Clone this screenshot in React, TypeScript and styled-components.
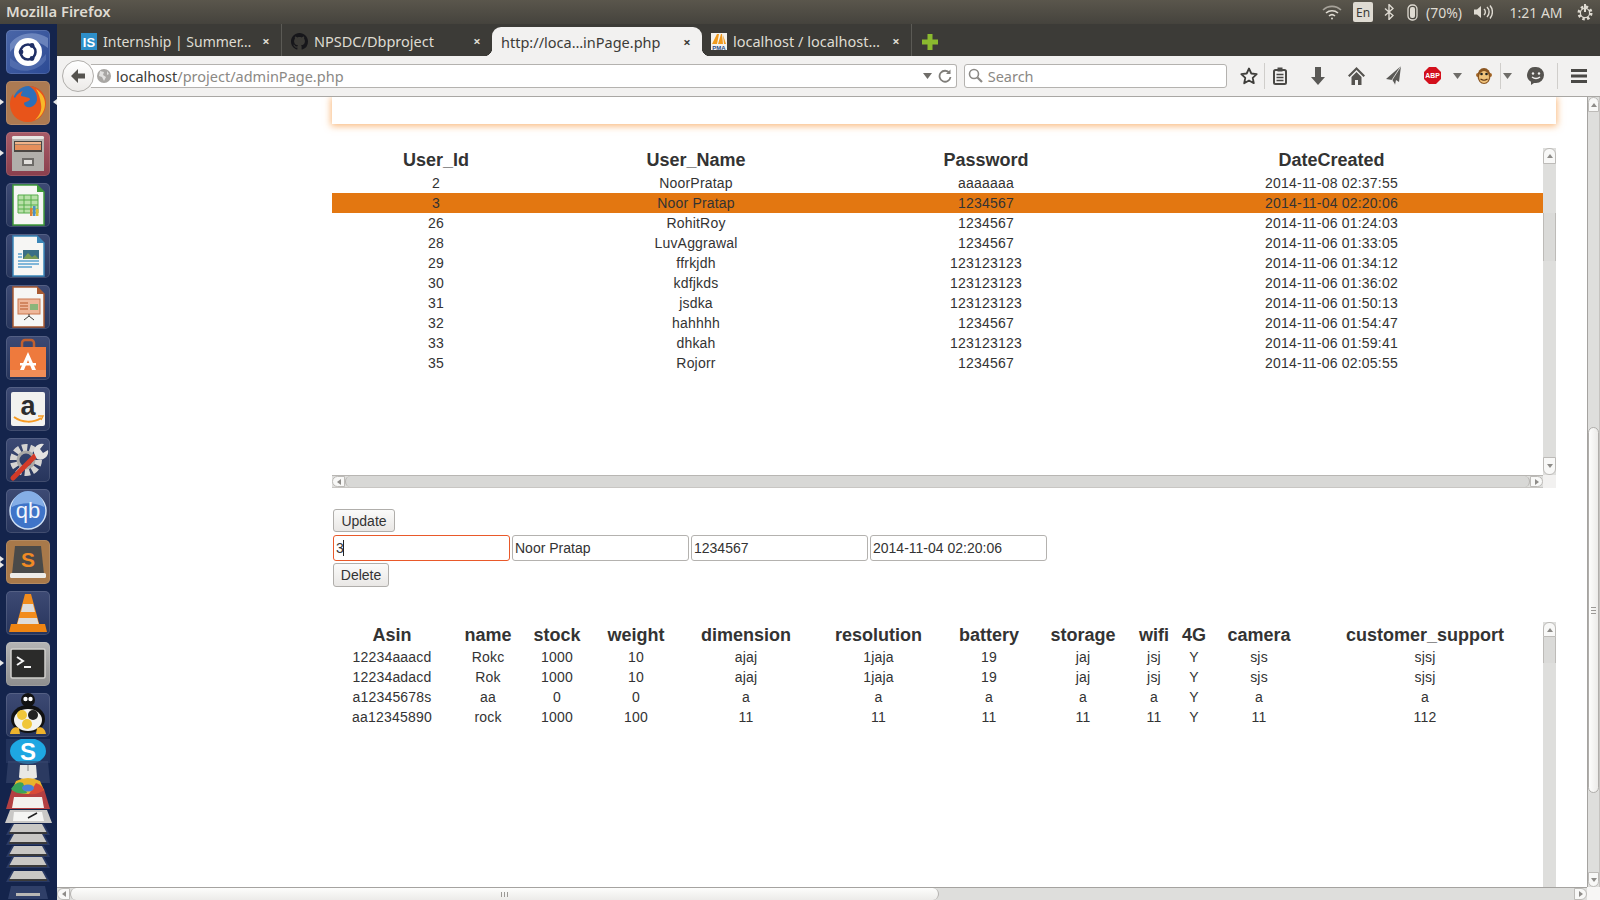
import React from 'react';
import styled, {createGlobalStyle} from 'styled-components';

const GlobalStyle = createGlobalStyle`
  html, body {
    margin: 0;
    padding: 0;
    height: 100%;
    overflow: hidden;
    background: #fff;
  }
  #root {
    height: 100%;
  }
  * {
    box-sizing: border-box;
  }
`;

const UI_FONT = `"Noto Sans", "Open Sans", sans-serif`;
const PAGE_FONT = `"Liberation Sans", Arial, sans-serif`;
const DARK_TILE = 'linear-gradient(#3d4a74, #27355c)';

const Desktop = styled.div`
  width: 1600px;
  height: 900px;
  display: flex;
  flex-direction: column;
  overflow: hidden;
`;

/* ---------- ubuntu top panel ---------- */

const TopPanel = styled.div`
  height: 24px;
  flex: 0 0 24px;
  display: flex;
  align-items: center;
  padding: 0 5px 0 6px;
  background: linear-gradient(#5a564c, #45433d);
  color: #dfdbd2;
  font-family: ${UI_FONT};
  font-size: 14px;
`;

const AppName = styled.div`
  font-weight: 600;
  font-size: 14.8px;
  margin-top: -2px;
  flex: 1;
`;

const Indicators = styled.div`
  display: flex;
  align-items: center;
  height: 24px;
`;

const Indicator = styled.div<{$w: number}>`
  width: ${p => p.$w}px;
  display: flex;
  align-items: center;
  justify-content: center;
  white-space: nowrap;
`;

const LangBadge = styled.div`
  width: 20px;
  height: 20px;
  background: #dfdbd2;
  color: #3c3b37;
  border-radius: 2px;
  font-size: 12px;
  display: flex;
  align-items: center;
  justify-content: center;
`;

/* ---------- launcher ---------- */

const Body = styled.div`
  flex: 1;
  display: flex;
  min-height: 0;
`;

const Launcher = styled.div`
  width: 57px;
  flex: 0 0 57px;
  padding-top: 6px;
  display: flex;
  flex-direction: column;
  align-items: flex-start;
  gap: 7px;
  background: #14244c;
  overflow: hidden;
`;

const TileWrap = styled.div`
  position: relative;
  margin-left: 6px;
  width: 44px;
  height: 44px;
  flex: 0 0 44px;
`;

const Tile = styled.div<{$bg: string}>`
  width: 44px;
  height: 44px;
  border-radius: 5px;
  background: ${p => p.$bg};
  box-shadow: inset 0 0 0 1px rgba(255, 255, 255, 0.12);
  overflow: hidden;
  svg {
    display: block;
  }
`;

const PipLeft = styled.div<{$top?: number}>`
  position: absolute;
  left: -6px;
  top: ${p => p.$top ?? 18}px;
  border-left: 4px solid #e8e8e8;
  border-top: 3.5px solid transparent;
  border-bottom: 3.5px solid transparent;
`;

const PipRight = styled.div`
  position: absolute;
  right: -7px;
  top: 18px;
  border-right: 4px solid #e8e8e8;
  border-top: 3.5px solid transparent;
  border-bottom: 3.5px solid transparent;
`;

const StackArt = styled.svg`
  flex: 0 0 160px;
  margin-top: -5px;
  display: block;
`;

/* ---------- firefox window ---------- */

const Win = styled.div`
  flex: 1;
  min-width: 0;
  display: flex;
  flex-direction: column;
`;

const TabBar = styled.div`
  height: 32px;
  flex: 0 0 32px;
  display: flex;
  align-items: stretch;
  padding-left: 15px;
  background: #3c3b37;
  font-family: ${UI_FONT};
  font-size: 14.5px;
  color: #dfdbd2;
`;

const Tab = styled.div<{$active?: boolean; $divider?: boolean}>`
  position: relative;
  width: 210px;
  display: flex;
  align-items: center;
  padding: ${p => (p.$active ? '0 9px' : '2px 9px 0')};
  margin-top: ${p => (p.$active ? 3 : 0)}px;
  gap: 6px;
  border-right: ${p => (p.$divider ? '1px solid #5b5a55' : 'none')};
  background: ${p => (p.$active ? '#f2f1f0' : 'transparent')};
  color: ${p => (p.$active ? '#3c3b37' : '#dfdbd2')};
  border-radius: ${p => (p.$active ? '9px 9px 0 0' : '0')};
  ${p =>
    p.$active &&
    `
    &::before, &::after {
      content: '';
      position: absolute;
      bottom: 0;
      width: 8px;
      height: 8px;
    }
    &::before {
      left: -8px;
      background: radial-gradient(circle at 0 0, transparent 8px, #f2f1f0 8.5px);
    }
    &::after {
      right: -8px;
      background: radial-gradient(circle at 100% 0, transparent 8px, #f2f1f0 8.5px);
    }
  `}
`;

const TabTitle = styled.div<{$tight?: boolean}>`
  flex: 1;
  white-space: nowrap;
  font-size: ${p => (p.$tight ? '14px' : 'inherit')};
`;

const TabClose = styled.span`
  font-size: 13px;
  font-weight: 700;
  width: 12px;
  text-align: center;
`;

const NewTab = styled.div`
  width: 36px;
  padding-top: 3px;
  display: flex;
  align-items: center;
  justify-content: center;
`;

const NavBar = styled.div`
  height: 41px;
  flex: 0 0 41px;
  display: flex;
  align-items: center;
  padding-left: 5px;
  padding-bottom: 1px;
  background: #f2f1f0;
  border-bottom: 1px solid #a9a7a4;
  font-family: ${UI_FONT};
`;

const BackButton = styled.div`
  width: 32px;
  height: 32px;
  border-radius: 50%;
  background: linear-gradient(#fff, #eceae8);
  border: 1px solid #b0aeab;
  display: flex;
  align-items: center;
  justify-content: center;
  flex: 0 0 32px;
  z-index: 1;
`;

const UrlBox = styled.div`
  width: 868px;
  height: 24px;
  margin-left: -3px;
  background: #fff;
  border: 1px solid #b4b2af;
  border-left: none;
  border-radius: 0 3px 3px 0;
  display: flex;
  align-items: center;
  padding: 0 2px 0 6px;
  font-size: 14.5px;
  color: #3c3b37;
`;

const UrlText = styled.div`
  flex: 1;
  margin-left: 5px;
  white-space: nowrap;
`;

const UrlRest = styled.span`
  color: #8b8985;
`;

const SearchBox = styled.div`
  width: 264px;
  height: 24px;
  margin-left: 7px;
  background: #fff;
  border: 1px solid #b4b2af;
  border-radius: 3px;
  display: flex;
  align-items: center;
  gap: 5px;
  padding-left: 3px;
  font-size: 14.5px;
  color: #8b8985;
`;

const ToolSlot = styled.div<{$w: number}>`
  width: ${p => p.$w}px;
  height: 24px;
  display: flex;
  align-items: center;
  justify-content: center;
`;

const ToolSep = styled.div`
  width: 1px;
  height: 26px;
  margin-left: -1px;
  background: #d0cecb;
`;

const Toolbar = styled.div`
  display: flex;
  align-items: center;
  margin-left: 6px;
`;

/* ---------- page ---------- */

const Viewport = styled.div`
  flex: 1;
  min-height: 0;
  display: flex;
`;

const Page = styled.div`
  flex: 1;
  min-width: 0;
  display: flex;
  flex-direction: column;
  padding: 0 31px 0 275px;
  background: #fff;
  overflow: hidden;
`;

const HeaderCard = styled.div`
  height: 27px;
  flex: 0 0 27px;
  background: #fff;
  box-shadow: 0 1px 7px 1px rgba(247, 160, 80, 0.75);
`;

const GridBox = styled.div<{$h?: number; $top: number}>`
  margin-top: ${p => p.$top}px;
  display: flex;
  flex-direction: column;
  ${p => (p.$h ? `flex: 0 0 ${p.$h}px;` : 'flex: 1; min-height: 0;')}
`;

const GridRow = styled.div`
  flex: 1;
  min-height: 0;
  display: flex;
`;

const GridScroll = styled.div`
  flex: 1;
  min-width: 0;
  overflow: hidden;
`;

const DataTable = styled.table<{$w: number}>`
  width: ${p => p.$w}px;
  table-layout: fixed;
  border-collapse: collapse;
  font-family: ${PAGE_FONT};
  font-size: 14px;
  color: #333;
`;

const Col = styled.col<{$w: number}>`
  width: ${p => p.$w}px;
`;

const HeadCell = styled.th<{$shift: number}>`
  height: 25px;
  padding: ${p => p.$shift}px 0 0;
  font-size: 18px;
  font-weight: 700;
  text-align: center;
  color: #333;
  white-space: nowrap;
`;

const DataRow = styled.tr<{$selected?: boolean}>`
  height: 20px;
  background: ${p => (p.$selected ? '#e37711' : 'transparent')};
`;

const DataCell = styled.td`
  padding: 0;
  text-align: center;
  white-space: nowrap;
  letter-spacing: 0.2px;
`;

const FormBlock = styled.div`
  margin-top: 21px;
  display: flex;
  flex-direction: column;
  align-items: flex-start;
  padding-left: 1px;
`;

const ActionButton = styled.button<{$h: number; $w: number; $top?: number}>`
  width: ${p => p.$w}px;
  height: ${p => p.$h}px;
  margin-top: ${p => p.$top ?? 0}px;
  padding: 0;
  border: 1px solid #b0aeab;
  border-radius: 3px;
  background: linear-gradient(#fbfbfa, #e9e7e5);
  font-family: ${PAGE_FONT};
  font-size: 14px;
  color: #333;
`;

const FieldRow = styled.div`
  display: flex;
  gap: 2px;
  margin-top: 3px;
`;

const FieldWrap = styled.div`
  position: relative;
`;

const Field = styled.input<{$focused?: boolean}>`
  display: block;
  width: 177px;
  height: 26px;
  padding: 0 2px;
  border: 1px solid ${p => (p.$focused ? '#e9592a' : '#b4b2af')};
  border-radius: 3px;
  outline: none;
  background: #fff;
  font-family: ${PAGE_FONT};
  font-size: 14px;
  color: #333;
`;

const Caret = styled.div`
  position: absolute;
  left: 10px;
  top: 5px;
  width: 1px;
  height: 16px;
  background: #222;
`;

/* ---------- scrollbars ---------- */

const VBar = styled.div<{$edge?: boolean}>`
  width: 13px;
  flex: 0 0 13px;
  display: flex;
  flex-direction: column;
  background: #dededc;
  border-left: ${p => (p.$edge ? '1px solid #a5a3a0' : 'none')};
  border-right: ${p => (p.$edge ? '1px solid #c5c3c0' : 'none')};
`;

const HBar = styled.div<{$page?: boolean}>`
  flex: 1;
  min-width: 0;
  display: flex;
  background: #dededc;
  border-top: ${p => (p.$page ? '1px solid #a5a3a0' : '1px solid #b8b6b3')};
  border-bottom: ${p => (p.$page ? 'none' : '1px solid #c8c6c3')};
`;

const VStep = styled.div<{$h: number; $down?: boolean}>`
  height: ${p => p.$h}px;
  flex: 0 0 ${p => p.$h}px;
  background: #f8f8f7;
  border: 1px solid #bdbbb8;
  border-radius: ${p => (p.$down ? '0 0 6px 6px' : '6px 6px 0 0')};
  display: flex;
  align-items: center;
  justify-content: center;
`;

const HStep = styled.div<{$right?: boolean}>`
  width: 13px;
  flex: 0 0 13px;
  background: #f8f8f7;
  border: 1px solid #bdbbb8;
  border-radius: ${p => (p.$right ? '0 6px 6px 0' : '6px 0 0 6px')};
  display: flex;
  align-items: center;
  justify-content: center;
`;

const ArrowUp = styled.div`
  border-bottom: 4px solid #8e8c89;
  border-left: 3px solid transparent;
  border-right: 3px solid transparent;
`;

const ArrowDown = styled.div`
  border-top: 4px solid #8e8c89;
  border-left: 3px solid transparent;
  border-right: 3px solid transparent;
`;

const ArrowLeft = styled.div`
  border-right: 4px solid #8e8c89;
  border-top: 3px solid transparent;
  border-bottom: 3px solid transparent;
`;

const ArrowRight = styled.div`
  border-left: 4px solid #8e8c89;
  border-top: 3px solid transparent;
  border-bottom: 3px solid transparent;
`;

const TrackGap = styled.div<{$size?: number}>`
  ${p => (p.$size ? `flex: 0 0 ${p.$size}px;` : 'flex: 1;')}
`;

const VThumb = styled.div<{$h: number}>`
  flex: 0 0 ${p => p.$h}px;
  background: linear-gradient(90deg, #fdfdfc, #ecebe9);
  border: 1px solid #b0aeab;
  border-radius: 6px;
  display: flex;
  flex-direction: column;
  align-items: center;
  justify-content: center;
  gap: 2px;
`;

const GripLine = styled.div`
  width: 5px;
  height: 1px;
  background: #9b9996;
`;

const FlatThumb = styled.div<{$h: number}>`
  flex: 0 0 ${p => p.$h}px;
  background: #dadad8;
  border-left: 1px solid #bdbbb8;
  border-right: 1px solid #bdbbb8;
`;

const HThumb = styled.div<{$w?: number; $flat?: boolean}>`
  flex: ${p => (p.$w ? `0 0 ${p.$w}px` : '1')};
  background: ${p => (p.$flat ? '#d8d8d6' : 'linear-gradient(#fdfdfc, #ecebe9)')};
  border-right: 1px solid #b5b3b0;
  border-left: 1px solid #b5b3b0;
  border-radius: 6px;
  display: flex;
  align-items: center;
  justify-content: center;
  gap: 2px;
`;

const GripTick = styled.div`
  width: 1px;
  height: 5px;
  background: #9b9996;
`;

const Corner = styled.div<{$bg: string}>`
  width: 13px;
  flex: 0 0 13px;
  background: ${p => p.$bg};
`;

const BottomRow = styled.div`
  height: 13px;
  flex: 0 0 13px;
  display: flex;
`;

/* ---------- launcher artwork ---------- */

const UbuntuArt = () => (
  <svg width="44" height="44" viewBox="0 0 44 44">
    <path d="M4 14C12 2 30 0 42 8v10C30 8 14 8 4 22z" fill="#8ba0d0" opacity="0.6" />
    <path d="M40 30C32 42 14 44 4 36v-8c10 10 26 8 36-4z" fill="#5f79b8" opacity="0.6" />
    <circle cx="22" cy="22" r="14" fill="#fff" />
    <circle cx="22" cy="22" r="7.500" fill="none" stroke="#1f2f66" strokeWidth="2.600" />
    <circle cx="15" cy="22" r="2.400" fill="#1f2f66" />
    <circle cx="26" cy="15.500" r="2.400" fill="#1f2f66" />
    <circle cx="26" cy="28.500" r="2.400" fill="#1f2f66" />
  </svg>
);

const FirefoxArt = () => (
  <svg width="44" height="44" viewBox="0 0 44 44">
    <circle cx="23" cy="21" r="16" fill="#2d6fb8" />
    <path d="M23 5c9 0 17 7 17 17 0 11-8 19-18 19C11 41 4 33 4 23c0-4 1-7 3-10 0 2 1 3 2 4 2-4 5-6 8-7-2 2-2 4-2 5 3 1 8 1 9 3 0 2-5 3-6 4 0 3 3 5 7 4 3-1 6-4 6-8 0-6-3-10-8-13z" fill="#e8541a" />
    <path d="M30 8c6 4 9 9 9 15 0 7-4 13-10 16 5-5 7-10 6-16-1-6-2-10-5-15z" fill="#f8b82a" />
  </svg>
);

const FilesArt = () => (
  <svg width="44" height="44" viewBox="0 0 44 44">
    <rect x="6" y="4" width="32" height="35" rx="2" fill="#b7b5b1" />
    <rect x="6" y="4" width="32" height="3" rx="1.500" fill="#e9e7e4" />
    <rect x="8" y="9" width="28" height="11" fill="#4a4643" />
    <rect x="9" y="10" width="26" height="2.500" fill="#f1b389" />
    <rect x="9" y="13" width="26" height="5" fill="#e68f5b" />
    <rect x="6" y="20" width="32" height="19" fill="#b1afab" />
    <rect x="16" y="26" width="12" height="8" fill="#6d6b68" />
    <rect x="18" y="28" width="8" height="4" fill="#e2e0dd" />
  </svg>
);

const OfficeDoc = ({edge, children}: {edge: string; children: React.ReactNode}) => (
  <svg width="44" height="44" viewBox="0 0 44 44">
    <path d="M7 2h24l7 7v33H7z" fill="#f6f6f4" stroke={edge} strokeWidth="1.500" />
    <path d="M31 2l7 7h-7z" fill={edge} />
    {children}
  </svg>
);

const CalcArt = () => (
  <OfficeDoc edge="#3f9a3a">
    <path d="M12 12h20v18H12z" fill="#b9e0a9" stroke="#57ad4a" />
    <path d="M12 17h20M12 22h20M12 26h20M18 12v18M25 12v18" stroke="#57ad4a" />
    <rect x="24" y="25" width="2.500" height="8" fill="#d98236" />
    <rect x="27" y="23" width="2.500" height="10" fill="#4f8fc4" />
    <rect x="30" y="26" width="2.500" height="7" fill="#d9bb36" />
  </OfficeDoc>
);

const WriterArt = () => (
  <OfficeDoc edge="#3a86b8">
    <rect x="17" y="16" width="16" height="9" fill="#3b6f86" />
    <path d="M17 25l5-6 4 4 3-2 4 4z" fill="#7a9b54" />
    <path d="M12 20h4M12 23h4M12 27h21M12 30h21M12 33h14" stroke="#5ba2cf" strokeWidth="1.500" />
  </OfficeDoc>
);

const ImpressArt = () => (
  <OfficeDoc edge="#a85a32">
    <rect x="12" y="14" width="22" height="15" fill="#eeb79a" stroke="#c9774e" />
    <rect x="24" y="19" width="8" height="6" fill="#8bb57a" />
    <path d="M14 18h8M14 21h8M14 24h8" stroke="#c9774e" strokeWidth="1.500" />
    <path d="M23 29v2l-5 4M23 31l5 4" stroke="#3c3b37" fill="none" />
  </OfficeDoc>
);

const BagArt = () => (
  <svg width="44" height="44" viewBox="0 0 44 44">
    <path d="M16 12V7a3 3 0 0 1 3-3h6a3 3 0 0 1 3 3v5" fill="none" stroke="#c2602f" strokeWidth="2.500" />
    <path d="M4 11h36v30H4z" fill="#ee7a3d" />
    <path d="M4 34h36v7H4z" fill="#f08d57" />
    <path d="M22 16l-8 18h4l4-10 4 10h4z" fill="#fff" />
    <path d="M14 27h16v2.500H14z" fill="#fff" />
  </svg>
);

const AmazonArt = () => (
  <svg width="44" height="44" viewBox="0 0 44 44">
    <rect x="5" y="5" width="34" height="34" rx="2" fill="#f2f2f0" />
    <text x="22" y="28" textAnchor="middle" fontFamily="Liberation Sans" fontWeight="700" fontSize="27" fill="#2d2d2d">a</text>
    <path d="M8 30c8 6 20 6 27 1" fill="none" stroke="#f59a23" strokeWidth="2" />
    <path d="M32 29l5 0-2 4" fill="none" stroke="#f59a23" strokeWidth="1.500" />
  </svg>
);

const ToolsArt = () => (
  <svg width="44" height="44" viewBox="0 0 44 44">
    <circle cx="20" cy="22" r="12" fill="none" stroke="#d5d4d2" strokeWidth="8" strokeDasharray="5 2.500" />
    <circle cx="20" cy="22" r="8" fill="none" stroke="#aaa9a6" strokeWidth="3" />
    <path d="M7 40l22-22" stroke="#d23a28" strokeWidth="5" strokeLinecap="round" />
    <path d="M28 15a8 8 0 0 1 10-9l-4 5 3 4 5-3a8 8 0 0 1-11 9z" fill="#e4e3e1" />
  </svg>
);

const QbArt = () => (
  <svg width="44" height="44" viewBox="0 0 44 44">
    <circle cx="22" cy="22" r="18" fill="#3f74c8" stroke="#cfe0f5" strokeWidth="1.500" />
    <path d="M6 18a16 16 0 0 1 32 0c-9-5-23-5-32 0z" fill="#85aee6" />
    <text x="22" y="29" textAnchor="middle" fontFamily="Liberation Sans" fontSize="22" fill="#f2f6fc">qb</text>
  </svg>
);

const SublimeArt = () => (
  <svg width="44" height="44" viewBox="0 0 44 44">
    <path d="M9 6h26l3 28H6z" fill="#4a4a49" />
    <rect x="4" y="33" width="36" height="5" rx="1.500" fill="#eeece8" />
    <text x="22" y="27" textAnchor="middle" fontFamily="Liberation Sans" fontWeight="700" fontSize="21" fill="#f08a24">S</text>
  </svg>
);

const VlcArt = () => (
  <svg width="44" height="44" viewBox="0 0 44 44">
    <path d="M19 3h6l9 33H10z" fill="#f28c1c" />
    <path d="M17 13h10l2 8H15z" fill="#dedcda" />
    <path d="M13 27h18l2 7H11z" fill="#dedcda" />
    <path d="M5 33h34l2 8H3z" fill="#ee8412" />
  </svg>
);

const TerminalArt = () => (
  <svg width="44" height="44" viewBox="0 0 44 44">
    <rect x="5" y="7" width="34" height="29" rx="1.500" fill="#2b2b2a" stroke="#d0cfcc" strokeWidth="1.500" />
    <path d="M11 15l6 4-6 4" fill="none" stroke="#f5f5f5" strokeWidth="2" />
    <path d="M18 25h7" stroke="#f5f5f5" strokeWidth="2" />
  </svg>
);

const PenguinArt = () => (
  <svg width="44" height="44" viewBox="0 0 44 44">
    <ellipse cx="22" cy="26" rx="17" ry="14" fill="#111" />
    <ellipse cx="22" cy="27" rx="14" ry="11" fill="#f3f3f0" />
    <circle cx="22" cy="7" r="7" fill="#111" />
    <circle cx="19.500" cy="6" r="2.200" fill="#fff" />
    <circle cx="24.500" cy="6" r="2.200" fill="#fff" />
    <circle cx="16" cy="22" r="5" fill="#f0c63a" />
    <circle cx="27" cy="22" r="5" fill="#222" />
    <circle cx="21" cy="31" r="5" fill="#f0c63a" />
    <path d="M4 41c1-6 5-8 9-6l1 6zM40 41c-1-6-5-8-9-6l-1 6z" fill="#eeb32c" />
  </svg>
);

const StackArtwork = () => (
  <StackArt width="57" height="160" viewBox="0 0 57 160">
    <rect x="6" y="0" width="44" height="24" fill="#2a3a64" opacity="0.7" />
    <ellipse cx="28" cy="12" rx="18" ry="13" fill="#1ea7e2" />
    <text x="28" y="21" textAnchor="middle" fontFamily="Liberation Sans" fontWeight="700" fontSize="24" fill="#fff">S</text>
    <path d="M8 22h40l2 22H6z" fill="#3a4970" opacity="0.6" />
    <path d="M20 26h16l1 12c0 3-18 3-18 0z" fill="#e9e8e4" />
    <path d="M28 26v6" stroke="#888" />
    <path d="M6 70l6-20h32l6 20z" fill="#b44042" />
    <path d="M16 42q12-6 24 0l4 9q-16 8-32 0z" fill="#e8b42c" />
    <path d="M11 50q6-9 12-6l4 10q-10 2-16-4z" fill="#3aa45a" />
    <path d="M36 44q6 2 8 7-6 5-15 4z" fill="#d94a38" />
    <ellipse cx="28" cy="49" rx="6" ry="3.500" fill="#4a82d8" />
    <path d="M14 58h28l2 11H12z" fill="#f3f1ee" />
    <path d="M5 84l5-13h37l5 13z" fill="#c9c8c6" />
    <path d="M14 73h28l2 9H13z" fill="#f5f5f3" />
    <path d="M28 79l9-5" stroke="#222" strokeWidth="1.500" />
    {[85, 95, 107, 118, 132].map(y => (
      <g key={y}>
        <path d={`M6 ${y + 11}l6-11h32l6 11z`} fill="#2a3a64" />
        <path d={`M9 ${y + 9}l5-9h28l5 9z`} fill="#c8c7c4" />
        <rect x="9" y={y + 8} width="38" height="2" fill="#3a3a3a" />
      </g>
    ))}
    <path d="M8 160l3-13h34l3 13z" fill="#2f3f68" />
    <rect x="16" y="154" width="24" height="3" fill="#b9b8b5" />
  </StackArt>
);

const tiles: {bg: string; art: React.ReactNode; left?: boolean; right?: boolean; twin?: boolean}[] = [
  {bg: 'linear-gradient(135deg, #4a66a8, #2c4a94)', art: <UbuntuArt />},
  {bg: '#ac7a52', art: <FirefoxArt />, left: true, right: true},
  {bg: 'linear-gradient(#a85c68, #8a3f4d)', art: <FilesArt />, left: true},
  {bg: DARK_TILE, art: <CalcArt />},
  {bg: DARK_TILE, art: <WriterArt />},
  {bg: DARK_TILE, art: <ImpressArt />},
  {bg: DARK_TILE, art: <BagArt />},
  {bg: DARK_TILE, art: <AmazonArt />},
  {bg: DARK_TILE, art: <ToolsArt />},
  {bg: DARK_TILE, art: <QbArt />},
  {bg: '#a8794a', art: <SublimeArt />, twin: true},
  {bg: DARK_TILE, art: <VlcArt />},
  {bg: 'linear-gradient(#b5b5b5, #8e8e8e)', art: <TerminalArt />, left: true},
  {bg: DARK_TILE, art: <PenguinArt />},
];

/* ---------- toolbar + panel icons ---------- */

const Glyph = styled.svg`
  display: block;
`;

const WifiIcon = () => (
  <Glyph width="20" height="16" viewBox="0 0 20 16" fill="none" stroke="#dfdbd2" strokeWidth="1.600">
    <path d="M1 6a13 13 0 0 1 18 0" opacity="0.6" />
    <path d="M4 9a9 9 0 0 1 12 0" />
    <path d="M7 12a4.500 4.500 0 0 1 6 0" />
    <circle cx="10" cy="14.500" r="1" fill="#dfdbd2" stroke="none" />
  </Glyph>
);

const BluetoothIcon = () => (
  <Glyph width="10" height="16" viewBox="0 0 10 16" fill="none" stroke="#dfdbd2" strokeWidth="1.400">
    <path d="M1 4.500l8 7-4 4V.5l4 4-8 7" />
  </Glyph>
);

const MouseIcon = () => (
  <Glyph width="11" height="17" viewBox="0 0 11 17" fill="none" stroke="#dfdbd2" strokeWidth="1.300">
    <rect x="1" y="1" width="9" height="15" rx="4" />
    <rect x="3" y="3" width="5" height="11" rx="2" fill="#dfdbd2" stroke="none" />
  </Glyph>
);

const VolumeIcon = () => (
  <Glyph width="20" height="16" viewBox="0 0 20 16" fill="none" stroke="#dfdbd2" strokeWidth="1.400">
    <path d="M1 5.500h3l4-3.500v12l-4-3.500H1z" fill="#dfdbd2" stroke="none" />
    <path d="M11 5a4 4 0 0 1 0 6M14 3a7 7 0 0 1 0 10M17 1.500a10 10 0 0 1 0 13" />
  </Glyph>
);

const PowerGearIcon = () => (
  <Glyph width="18" height="18" viewBox="0 0 18 18" fill="none" stroke="#dfdbd2">
    <circle cx="9" cy="10" r="6" strokeWidth="3" strokeDasharray="2.400 2.300" />
    <circle cx="9" cy="10" r="4.600" strokeWidth="1.200" />
    <path d="M9 1v8" strokeWidth="2" />
  </Glyph>
);

const GithubMark = () => (
  <Glyph width="17" height="17" viewBox="0 0 16 16">
    <path
      fill="#16161a"
      d="M8 0C3.58 0 0 3.58 0 8c0 3.54 2.29 6.53 5.47 7.59.4.07.55-.17.55-.38 0-.19-.01-.82-.01-1.49-2.01.37-2.53-.49-2.69-.94-.09-.23-.48-.94-.82-1.13-.28-.15-.68-.52-.01-.53.63-.01 1.08.58 1.23.82.72 1.21 1.87.87 2.33.66.07-.52.28-.87.51-1.07-1.78-.2-3.64-.89-3.64-3.95 0-.87.31-1.59.82-2.15-.08-.2-.36-1.02.08-2.12 0 0 .67-.21 2.2.82.64-.18 1.32-.27 2-.27s1.36.09 2 .27c1.53-1.04 2.2-.82 2.2-.82.44 1.1.16 1.92.08 2.12.51.56.82 1.27.82 2.15 0 3.07-1.87 3.75-3.65 3.95.29.25.54.73.54 1.48 0 1.07-.01 1.93-.01 2.2 0 .21.15.46.55.38A8.01 8.01 0 0 0 16 8c0-4.420-3.580-8-8-8z"
    />
  </Glyph>
);

const IsMark = () => (
  <Glyph width="16" height="17" viewBox="0 0 16 17">
    <rect width="16" height="17" fill="#2e8fc9" />
    <text x="8" y="13.500" textAnchor="middle" fontFamily="Liberation Sans" fontWeight="700" fontSize="13" fill="#fff">IS</text>
  </Glyph>
);

const PmaMark = () => (
  <Glyph width="16" height="17" viewBox="0 0 16 17">
    <rect width="16" height="17" fill="#f4f2ee" />
    <path d="M1 11L6 1h2L6 11zM7 11l3-10h1l1 10zM12 2l3 9h-2z" fill="#f09a1e" />
    <text x="8" y="16.500" textAnchor="middle" fontFamily="Liberation Sans" fontWeight="700" fontSize="6" fill="#2b4c8c">PMA</text>
  </Glyph>
);

const PlusIcon = () => (
  <Glyph width="16" height="16" viewBox="0 0 16 16">
    <path d="M5.500 0h5v5.500H16v5h-5.500V16h-5v-5.500H0v-5h5.500z" fill="#8bbb2f" />
  </Glyph>
);

const BackIcon = () => (
  <Glyph width="16" height="16" viewBox="0 0 16 16">
    <path d="M8 1L1 8l7 7V10.500h7v-5H8z" fill="#55534f" />
  </Glyph>
);

const GlobeIcon = () => (
  <Glyph width="14" height="14" viewBox="0 0 14 14">
    <circle cx="7" cy="7" r="7" fill="#a9a7a4" />
    <path d="M3 2l4 1-1 3 3 2-2 4-2-4-3-1zM10 2l2 3-2 1z" fill="#e2e1df" />
  </Glyph>
);

const DropTri = () => (
  <Glyph width="9" height="6" viewBox="0 0 9 6">
    <path d="M0 0h9L4.500 6z" fill="#6f6d69" />
  </Glyph>
);

const ReloadIcon = () => (
  <Glyph width="14" height="14" viewBox="0 0 14 14" fill="none" stroke="#7f7d79" strokeWidth="1.800">
    <path d="M11.500 4A5.500 5.500 0 1 0 12.500 8" />
    <path d="M12.500 0.500v4.500h-4.500z" fill="#7f7d79" stroke="none" />
  </Glyph>
);

const SearchIcon = () => (
  <Glyph width="15" height="15" viewBox="0 0 15 15" fill="none" stroke="#8b8985" strokeWidth="1.600">
    <circle cx="6" cy="6" r="4.500" />
    <path d="M9.500 9.500L14 14" strokeWidth="2.200" />
  </Glyph>
);

const StarIcon = () => (
  <Glyph width="18" height="18" viewBox="0 0 18 18">
    <path d="M9 1.500l2.300 5 5.400.6-4 3.700 1.100 5.400L9 13.500l-4.800 2.700 1.100-5.400-4-3.700 5.400-.6z" fill="none" stroke="#3f3e3b" strokeWidth="1.800" strokeLinejoin="round" />
  </Glyph>
);

const ClipboardIcon = () => (
  <Glyph width="14" height="18" viewBox="0 0 14 18">
    <rect x="1" y="3" width="12" height="14" rx="1.500" fill="none" stroke="#4a4946" strokeWidth="2" />
    <rect x="4.500" y="0.500" width="5" height="4" fill="#4a4946" />
    <path d="M3.500 7.500h7M3.500 10.500h7M3.500 13.500h7" stroke="#4a4946" strokeWidth="1.500" />
  </Glyph>
);

const DownloadIcon = () => (
  <Glyph width="16" height="20" viewBox="0 0 16 20">
    <path d="M5 1h6v10h4l-7 8-7-8h4z" fill="#5a5956" />
  </Glyph>
);

const HomeIcon = () => (
  <Glyph width="17" height="18" viewBox="0 0 17 18">
    <path d="M8.500 0L0 8.500l1.500 1.500 7-7 7 7 1.500-1.500zM3.500 10l5-5 5 5v8h-3.500v-5h-3v5h-3.500z" fill="#55534f" />
  </Glyph>
);

const SendIcon = () => (
  <Glyph width="16" height="20" viewBox="0 0 16 20">
    <path d="M15 0L0 13l6 1 3 5 1-5 3 2z" fill="#5a5956" />
    <path d="M15 0L6 14l3 5" fill="none" stroke="#f2f1f0" strokeWidth="0.800" />
  </Glyph>
);

const AbpIcon = () => (
  <Glyph width="17" height="17" viewBox="0 0 17 17">
    <path d="M5 0h7l5 5v7l-5 5H5l-5-5V5z" fill="#d3101c" />
    <text x="8.500" y="11.200" textAnchor="middle" fontFamily="Liberation Sans" fontWeight="700" fontSize="6.800" fill="#fff">ABP</text>
  </Glyph>
);

const MonkeyIcon = () => (
  <Glyph width="16" height="19" viewBox="0 0 16 19">
    <circle cx="2" cy="9" r="2" fill="#a86a2a" />
    <circle cx="14" cy="9" r="2" fill="#a86a2a" />
    <ellipse cx="8" cy="10" rx="6.500" ry="8" fill="#8b5620" />
    <ellipse cx="8" cy="11" rx="5" ry="6" fill="#efc27a" />
    <circle cx="5.500" cy="8" r="1.300" fill="#222" />
    <circle cx="10.500" cy="8" r="1.300" fill="#222" />
    <path d="M4.500 13q3.500 2.500 7 0" fill="none" stroke="#5c3310" strokeWidth="1.200" />
  </Glyph>
);

const ChatIcon = () => (
  <Glyph width="18" height="19" viewBox="0 0 18 19">
    <path d="M9 1a8 8 0 0 1 0 16H7l-3 2v-3.200A8 8 0 0 1 9 1z" fill="#55534f" />
    <circle cx="6" cy="7.500" r="1.200" fill="#f2f1f0" />
    <circle cx="12" cy="7.500" r="1.200" fill="#f2f1f0" />
    <path d="M5 11q4 3 8 0" fill="none" stroke="#f2f1f0" strokeWidth="1.400" />
  </Glyph>
);

const MenuIcon = () => (
  <Glyph width="16" height="14" viewBox="0 0 16 14">
    <path d="M0 0h16v3H0zM0 5.500h16v3H0zM0 11h16v3H0z" fill="#4a4946" />
  </Glyph>
);

/* ---------- data ---------- */

const userCols = [208, 312, 268, 423];
const userHead = ['User_Id', 'User_Name', 'Password', 'DateCreated'];
const userRows = [
  ['2', 'NoorPratap', 'aaaaaaa', '2014-11-08 02:37:55'],
  ['3', 'Noor Pratap', '1234567', '2014-11-04 02:20:06'],
  ['26', 'RohitRoy', '1234567', '2014-11-06 01:24:03'],
  ['28', 'LuvAggrawal', '1234567', '2014-11-06 01:33:05'],
  ['29', 'ffrkjdh', '123123123', '2014-11-06 01:34:12'],
  ['30', 'kdfjkds', '123123123', '2014-11-06 01:36:02'],
  ['31', 'jsdka', '123123123', '2014-11-06 01:50:13'],
  ['32', 'hahhhh', '1234567', '2014-11-06 01:54:47'],
  ['33', 'dhkah', '123123123', '2014-11-06 01:59:41'],
  ['35', 'Rojorr', '1234567', '2014-11-06 02:05:55'],
];

const productCols = [120, 72, 66, 92, 128, 137, 84, 104, 38, 42, 88, 244];
const productHead = ['Asin', 'name', 'stock', 'weight', 'dimension', 'resolution', 'battery', 'storage', 'wifi', '4G', 'camera', 'customer_support'];
const productRows = [
  ['12234aaacd', 'Rokc', '1000', '10', 'ajaj', '1jaja', '19', 'jaj', 'jsj', 'Y', 'sjs', 'sjsj'],
  ['12234adacd', 'Rok', '1000', '10', 'ajaj', '1jaja', '19', 'jaj', 'jsj', 'Y', 'sjs', 'sjsj'],
  ['a12345678s', 'aa', '0', '0', 'a', 'a', 'a', 'a', 'a', 'Y', 'a', 'a'],
  ['aa12345890', 'rock', '1000', '100', '11', '11', '11', '11', '11', 'Y', '11', '112'],
];

const Grid = ({cols, head, rows, selected, headShift}: {cols: number[]; head: string[]; rows: string[][]; selected?: number; headShift: number}) => (
  <DataTable $w={cols.reduce((a, b) => a + b, 0)}>
    <colgroup>
      {cols.map((w, i) => (
        <Col key={i} $w={w} />
      ))}
    </colgroup>
    <thead>
      <tr>
        {head.map(h => (
          <HeadCell key={h} $shift={headShift}>{h}</HeadCell>
        ))}
      </tr>
    </thead>
    <tbody>
      {rows.map((r, i) => (
        <DataRow key={i} $selected={i === selected}>
          {r.map((c, j) => (
            <DataCell key={j}>{c}</DataCell>
          ))}
        </DataRow>
      ))}
    </tbody>
  </DataTable>
);

const App: React.FC = () => {
  return (
    <Desktop>
      <GlobalStyle />
      <TopPanel>
        <AppName>Mozilla Firefox</AppName>
        <Indicators>
          <Indicator $w={42}><WifiIcon /></Indicator>
          <Indicator $w={20}><LangBadge>En</LangBadge></Indicator>
          <Indicator $w={32}><BluetoothIcon /></Indicator>
          <Indicator $w={14}><MouseIcon /></Indicator>
          <Indicator $w={50}>(70%)</Indicator>
          <Indicator $w={28}><VolumeIcon /></Indicator>
          <Indicator $w={78}>1:21 AM</Indicator>
          <Indicator $w={20}><PowerGearIcon /></Indicator>
        </Indicators>
      </TopPanel>
      <Body>
        <Launcher>
          {tiles.map((t, i) => (
            <TileWrap key={i}>
              {t.left && <PipLeft />}
              {t.twin && <PipLeft $top={16} />}
              {t.twin && <PipLeft $top={22} />}
              {t.right && <PipRight />}
              <Tile $bg={t.bg}>{t.art}</Tile>
            </TileWrap>
          ))}
          <StackArtwork />
        </Launcher>
        <Win>
          <TabBar>
            <Tab $divider>
              <IsMark />
              <TabTitle $tight>Internship | Summer…</TabTitle>
              <TabClose>×</TabClose>
            </Tab>
            <Tab>
              <GithubMark />
              <TabTitle>NPSDC/Dbproject</TabTitle>
              <TabClose>×</TabClose>
            </Tab>
            <Tab $active>
              <TabTitle>http://loca…inPage.php</TabTitle>
              <TabClose>×</TabClose>
            </Tab>
            <Tab $divider>
              <PmaMark />
              <TabTitle>localhost / localhost…</TabTitle>
              <TabClose>×</TabClose>
            </Tab>
            <NewTab><PlusIcon /></NewTab>
          </TabBar>
          <NavBar>
            <BackButton><BackIcon /></BackButton>
            <UrlBox>
              <GlobeIcon />
              <UrlText>localhost<UrlRest>/project/adminPage.php</UrlRest></UrlText>
              <Indicator $w={16}><DropTri /></Indicator>
              <Indicator $w={18}><ReloadIcon /></Indicator>
            </UrlBox>
            <SearchBox>
              <SearchIcon />
              Search
            </SearchBox>
            <Toolbar>
              <ToolSlot $w={32}><StarIcon /></ToolSlot>
              <ToolSep />
              <ToolSlot $w={30}><ClipboardIcon /></ToolSlot>
              <ToolSlot $w={46}><DownloadIcon /></ToolSlot>
              <ToolSlot $w={30}><HomeIcon /></ToolSlot>
              <ToolSlot $w={46}><SendIcon /></ToolSlot>
              <ToolSlot $w={30}><AbpIcon /></ToolSlot>
              <ToolSlot $w={20}><DropTri /></ToolSlot>
              <ToolSlot $w={34}><MonkeyIcon /></ToolSlot>
              <ToolSep />
              <ToolSlot $w={12}><DropTri /></ToolSlot>
              <ToolSlot $w={45}><ChatIcon /></ToolSlot>
              <ToolSep />
              <ToolSlot $w={42}><MenuIcon /></ToolSlot>
            </Toolbar>
          </NavBar>
          <Viewport>
            <Page>
              <HeaderCard />
              <GridBox $h={340} $top={24}>
                <GridRow>
                  <GridScroll>
                    <Grid cols={userCols} head={userHead} rows={userRows} selected={1} headShift={0} />
                  </GridScroll>
                  <VBar>
                    <VStep $h={16}><ArrowUp /></VStep>
                    <TrackGap $size={49} />
                    <FlatThumb $h={48} />
                    <TrackGap />
                    <VStep $h={18} $down><ArrowDown /></VStep>
                  </VBar>
                </GridRow>
                <BottomRow>
                  <HBar>
                    <HStep><ArrowLeft /></HStep>
                    <HThumb $flat />
                    <HStep $right><ArrowRight /></HStep>
                  </HBar>
                  <Corner $bg="#f2f1f0" />
                </BottomRow>
              </GridBox>
              <FormBlock>
                <ActionButton $w={62} $h={23}>Update</ActionButton>
                <FieldRow>
                  <FieldWrap>
                    <Field $focused readOnly value="3" />
                    <Caret />
                  </FieldWrap>
                  <Field readOnly value="Noor Pratap" />
                  <Field readOnly value="1234567" />
                  <Field readOnly value="2014-11-04 02:20:06" />
                </FieldRow>
                <ActionButton $w={56} $h={24} $top={2}>Delete</ActionButton>
              </FormBlock>
              <GridBox $top={35}>
                <GridRow>
                  <GridScroll>
                    <Grid cols={productCols} head={productHead} rows={productRows} headShift={2} />
                  </GridScroll>
                  <VBar>
                    <VStep $h={15}><ArrowUp /></VStep>
                    <FlatThumb $h={26} />
                    <TrackGap />
                  </VBar>
                </GridRow>
              </GridBox>
            </Page>
            <VBar $edge>
              <VStep $h={15}><ArrowUp /></VStep>
              <TrackGap $size={315} />
              <VThumb $h={366}>
                <GripLine />
                <GripLine />
                <GripLine />
              </VThumb>
              <TrackGap />
              <VStep $h={15} $down><ArrowDown /></VStep>
            </VBar>
          </Viewport>
          <BottomRow>
            <HBar $page>
              <HStep><ArrowLeft /></HStep>
              <HThumb $w={869}>
                <GripTick />
                <GripTick />
                <GripTick />
              </HThumb>
              <TrackGap />
              <HStep $right><ArrowRight /></HStep>
            </HBar>
            <Corner $bg="#f7f6f5" />
          </BottomRow>
        </Win>
      </Body>
    </Desktop>
  );
};

export default App;
